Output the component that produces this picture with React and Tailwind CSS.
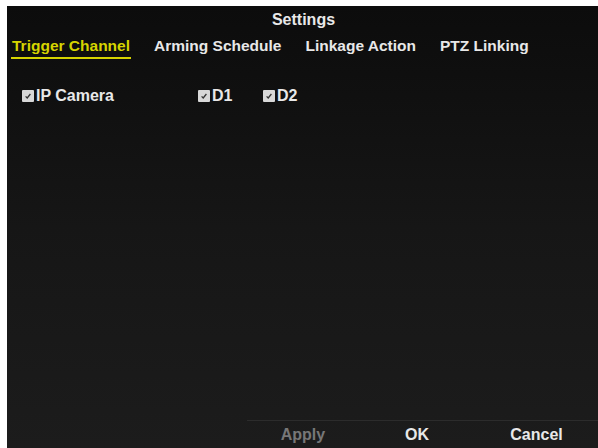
function Check() {
    return (
        <span className="inline-flex items-center justify-center w-[12px] h-[12px] bg-[#d8d8d8] rounded-[1px]">
            <svg viewBox="0 0 10 10" className="w-[8px] h-[8px]">
                <path d="M2 5.5 L4 7.5 L8 2.5" fill="none" stroke="#333" strokeWidth="1.6" />
            </svg>
        </span>
    );
}

const tabs = ["Trigger Channel", "Arming Schedule", "Linkage Action", "PTZ Linking"];

export default function App() {
    return (
        <div
            className="w-[598px] h-[448px] bg-white pt-[6px] pl-[7px] overflow-hidden"
            style={{ fontFamily: '"Liberation Sans", Arial, sans-serif' }}
        >
            <div className="h-full flex flex-col bg-gradient-to-b from-[#0c0c0c] via-[#161616] to-[#1c1c1c] text-[#e8e8e8] font-bold">
                <div className="h-[26px] flex items-center justify-center text-[16px] pt-[2px] pl-[2px]">Settings</div>
                <div className="flex items-end h-[27px] text-[15.5px] pl-[4px] gap-[22px]">
                    {tabs.map((t, i) => (
                        <div
                            key={t}
                            className={
                                i === 0
                                    ? "text-[#d6d400] border-b-2 border-[#d6d400] pb-[1px] px-[1px] leading-[20px]"
                                    : "pb-[3px] px-[1px] leading-[20px]"
                            }
                        >
                            {t}
                        </div>
                    ))}
                </div>
                <div className="flex items-center h-[22px] mt-[26px] text-[16px] pl-[15px]">
                    <div className="flex items-center gap-[2px] w-[176px]">
                        <Check />
                        <span>IP Camera</span>
                    </div>
                    <div className="flex items-center gap-[2px] w-[65px]">
                        <Check />
                        <span>D1</span>
                    </div>
                    <div className="flex items-center gap-[2px]">
                        <Check />
                        <span>D2</span>
                    </div>
                </div>
                <div className="flex-1" />
                <div className="h-[28px] flex items-center border-t border-[#2c2c2c] ml-[240px] text-[16px]">
                    <div className="w-[112px] text-center text-[#777]">Apply</div>
                    <div className="w-[116px] text-center">OK</div>
                    <div className="flex-1 text-center">Cancel</div>
                </div>
            </div>
        </div>
    );
}
